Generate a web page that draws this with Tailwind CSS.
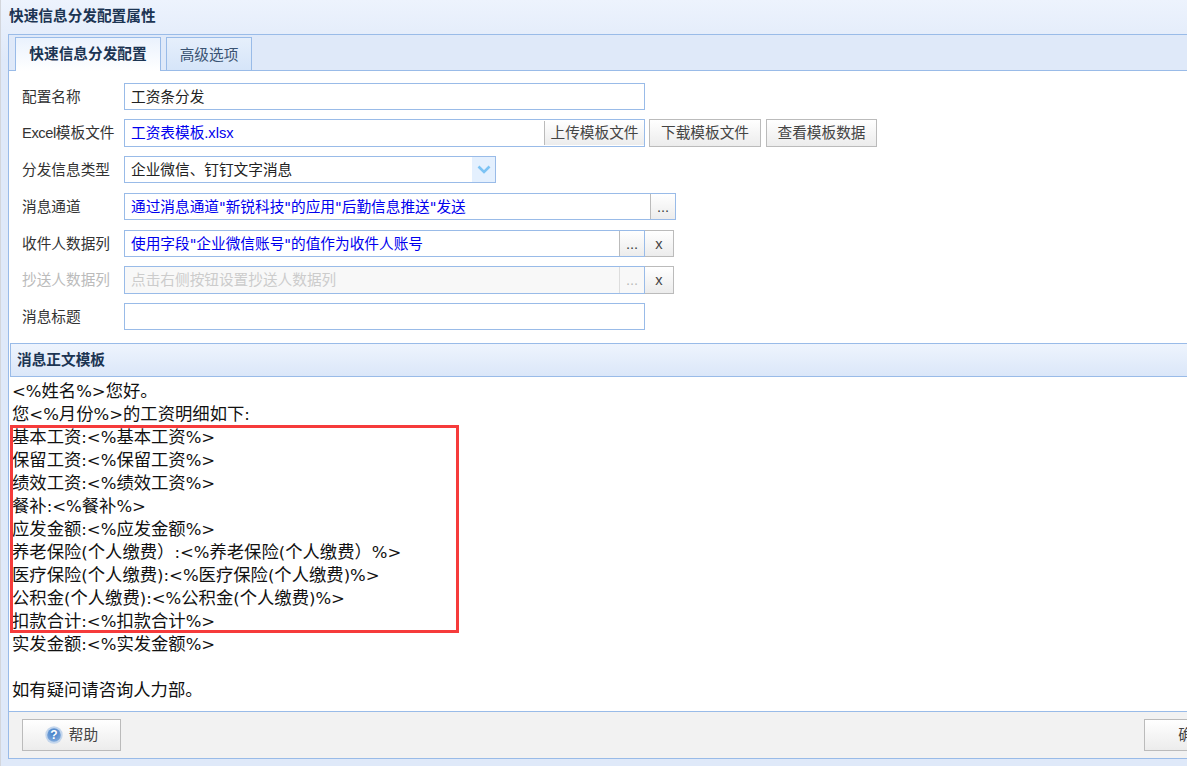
<!DOCTYPE html>
<html lang="zh-CN">
  <head>
    <meta charset="UTF-8" />
    <title>快速信息分发配置属性</title>
    <script src="https://cdn.jsdelivr.net/npm/@tailwindcss/browser@4"></script>
  </head>
  <body class="h-[766px] w-[1187px] overflow-hidden bg-[#dfe9f9] font-['Liberation_Sans','Noto_Sans_CJK_SC',sans-serif] text-[14.67px] text-[#333]">
    <div class="flex h-[766px] w-[1400px] flex-col border-l border-[#d3d6dc] bg-gradient-to-b from-[#edf3fd] to-[#dfe9f9] to-[60px] pb-[7px] pl-[7px]">
      <div class="flex h-[30px] flex-shrink-0 items-center pl-px pt-[2px] font-bold text-[#1c3553]">快速信息分发配置属性</div>
      <div class="mt-[4px] flex min-h-0 flex-1 flex-col border border-[#99bbe8] bg-white">
        <!-- tabs -->
        <div class="flex h-[36px] flex-shrink-0 items-end gap-[5px] border-b border-[#99bbe8] bg-[#dfe9f9] pl-[6px]">
          <div class="-mb-px flex h-[34px] w-[146px] items-center justify-center border border-b-0 border-[#99bbe8] bg-gradient-to-b from-[#eaf2fd] to-white pb-px font-bold text-[#1c3553]">快速信息分发配置</div>
          <div class="flex h-[33px] w-[86px] items-center justify-center border border-b-0 border-[#99bbe8] bg-gradient-to-b from-[#e6effb] to-[#d6e5f9] pt-px text-[#3a5372]">高级选项</div>
        </div>
        <!-- form -->
        <div class="flex flex-shrink-0 flex-col pl-[13px] pt-[12px]">
          <div class="flex h-[27px] items-center">
            <label class="w-[102px]">配置名称</label>
            <div class="flex h-[27px] w-[521px] items-center border border-[#99bbe8] pl-[6px] text-[#222]">工资条分发</div>
          </div>
          <div class="mt-[9px] flex h-[28px] items-center">
            <label class="w-[102px]"><span class="tracking-[-0.4px]">Excel</span>模板文件</label>
            <div class="flex h-[28px] w-[521px] items-center justify-between border border-[#99bbe8] pl-[6px] text-[#0000ee]">
              <span>工资表模板.xlsx</span>
              <button class="h-[24px] w-[100px] border-l border-[#bbb] bg-gradient-to-b from-white to-[#ececec] text-[#444]">上传模板文件</button>
            </div>
            <button class="ml-[4px] h-[28px] w-[112px] border border-[#bbb] bg-gradient-to-b from-white to-[#ececec] text-[#444]">下载模板文件</button>
            <button class="ml-[5px] h-[28px] w-[111px] border border-[#bbb] bg-gradient-to-b from-white to-[#ececec] text-[#444]">查看模板数据</button>
          </div>
          <div class="mt-[9px] flex h-[27px] items-center">
            <label class="w-[102px]">分发信息类型</label>
            <div class="flex h-[27px] w-[372px] items-center justify-between border border-[#99bbe8] pl-[6px] text-[#222]">
              <span>企业微信、钉钉文字消息</span>
              <span class="flex h-[25px] w-[23px] items-center justify-center bg-[#e4f0fe]">
                <svg width="14" height="9" viewBox="0 0 14 9" fill="none"><path d="M1.5 1.5 7 7l5.5-5.5" stroke="#7cc3f4" stroke-width="2.6" /></svg>
              </span>
            </div>
          </div>
          <div class="mt-[10px] flex h-[27px] items-center">
            <label class="w-[102px]">消息通道</label>
            <div class="flex h-[27px] w-[552px] items-center justify-between border border-[#99bbe8] pl-[6px] text-[#0000ee]">
              <span class="font-['DejaVu_Sans','Noto_Sans_CJK_SC',sans-serif]">通过消息通道"新锐科技"的应用"后勤信息推送"发送</span>
              <button class="h-[25px] w-[25px] border-l border-[#bbb] bg-gradient-to-b from-white to-[#ececec] text-[#444]">...</button>
            </div>
          </div>
          <div class="mt-[10px] flex h-[27px] items-center">
            <label class="w-[102px]">收件人数据列</label>
            <div class="flex h-[27px] w-[521px] items-center justify-between border border-[#99bbe8] pl-[6px] text-[#0000ee]">
              <span class="font-['DejaVu_Sans','Noto_Sans_CJK_SC',sans-serif]">使用字段"企业微信账号"的值作为收件人账号</span>
              <button class="h-[25px] w-[25px] border-l border-[#bbb] bg-gradient-to-b from-white to-[#ececec] text-[#444]">...</button>
            </div>
            <button class="h-[27px] w-[29px] border border-l-0 border-[#bbb] bg-gradient-to-b from-white to-[#ececec] text-[#444]">x</button>
          </div>
          <div class="mt-[9px] flex h-[28px] items-center">
            <label class="w-[102px] text-[#bbb]">抄送人数据列</label>
            <div class="flex h-[28px] w-[521px] items-center justify-between border border-[#99bbe8] bg-[#f8f8f8] pl-[6px] text-[#ccc]">
              <span>点击右侧按钮设置抄送人数据列</span>
              <button class="h-[26px] w-[25px] border-l border-[#ddd] text-[#bbb]">...</button>
            </div>
            <button class="h-[28px] w-[29px] border border-l-0 border-[#bbb] bg-gradient-to-b from-white to-[#ececec] text-[#444]">x</button>
          </div>
          <div class="mt-[9px] flex h-[27px] items-center">
            <label class="w-[102px]">消息标题</label>
            <div class="h-[27px] w-[521px] border border-[#99bbe8]"></div>
          </div>
        </div>
        <!-- body template -->
        <div class="mt-[13px] ml-px flex h-[34px] flex-shrink-0 items-center border border-[#99bbe8] bg-gradient-to-b from-[#eef4fd] to-[#dbe7f9] pl-[6px] font-bold text-[#1c3553]">消息正文模板</div>
        <div class="relative min-h-0 flex-1 whitespace-pre pl-[3px] pt-[3px] font-['DejaVu_Sans','Noto_Sans_CJK_SC',sans-serif] text-[16.5px] leading-[23px] text-[#111] [&_b]:text-[17.33px] [&_b]:font-normal [&_b]:leading-[0px] [&_b]:font-['Noto_Sans_CJK_SC',sans-serif]">&lt;%<b>姓名</b>%&gt;<b>您好。</b>
<b>您</b>&lt;%<b>月份</b>%&gt;<b>的工资明细如下</b>:
<b>基本工资</b>:&lt;%<b>基本工资</b>%&gt;
<b>保留工资</b>:&lt;%<b>保留工资</b>%&gt;
<b>绩效工资</b>:&lt;%<b>绩效工资</b>%&gt;
<b>餐补</b>:&lt;%<b>餐补</b>%&gt;
<b>应发金额</b>:&lt;%<b>应发金额</b>%&gt;
<b>养老保险</b>(<b>个人缴费）</b>:&lt;%<b>养老保险</b>(<b>个人缴费）</b>%&gt;
<b>医疗保险</b>(<b>个人缴费</b>):&lt;%<b>医疗保险</b>(<b>个人缴费</b>)%&gt;
<b>公积金</b>(<b>个人缴费</b>):&lt;%<b>公积金</b>(<b>个人缴费</b>)%&gt;
<b>扣款合计</b>:&lt;%<b>扣款合计</b>%&gt;
<b>实发金额</b>:&lt;%<b>实发金额</b>%&gt;

<b>如有疑问请咨询人力部。</b><div class="absolute left-px top-[48px] h-[208px] w-[449px] border-[3px] border-[#f63b3b]"></div></div>
        <!-- footer -->
        <div class="flex h-[47px] flex-shrink-0 items-center justify-between border-t border-[#99bbe8] bg-[#f2f2f2] pl-[13px]">
          <button class="flex h-[32px] w-[99px] items-center justify-center gap-[6px] border border-[#bbb] bg-gradient-to-b from-white to-[#ececec] text-[#444]">
            <svg width="18" height="18" viewBox="0 0 18 18">
              <defs>
                <radialGradient id="helpball" cx="0.5" cy="0.35" r="0.65">
                  <stop offset="0" stop-color="#3f7cc6" />
                  <stop offset="1" stop-color="#7fa9dc" />
                </radialGradient>
              </defs>
              <circle cx="9" cy="9" r="8.7" fill="#c4d6ec" />
              <circle cx="9" cy="9" r="6.8" fill="url(#helpball)" />
              <text x="9" y="13" text-anchor="middle" font-size="12" font-weight="700" fill="#fff" font-family="Liberation Sans">?</text>
            </svg>
            帮助
          </button>
          <button class="mr-[157px] h-[32px] w-[98px] border border-[#bbb] bg-gradient-to-b from-white to-[#ececec] text-[#444]">确定</button>
        </div>
      </div>
    </div>
  </body>
</html>
